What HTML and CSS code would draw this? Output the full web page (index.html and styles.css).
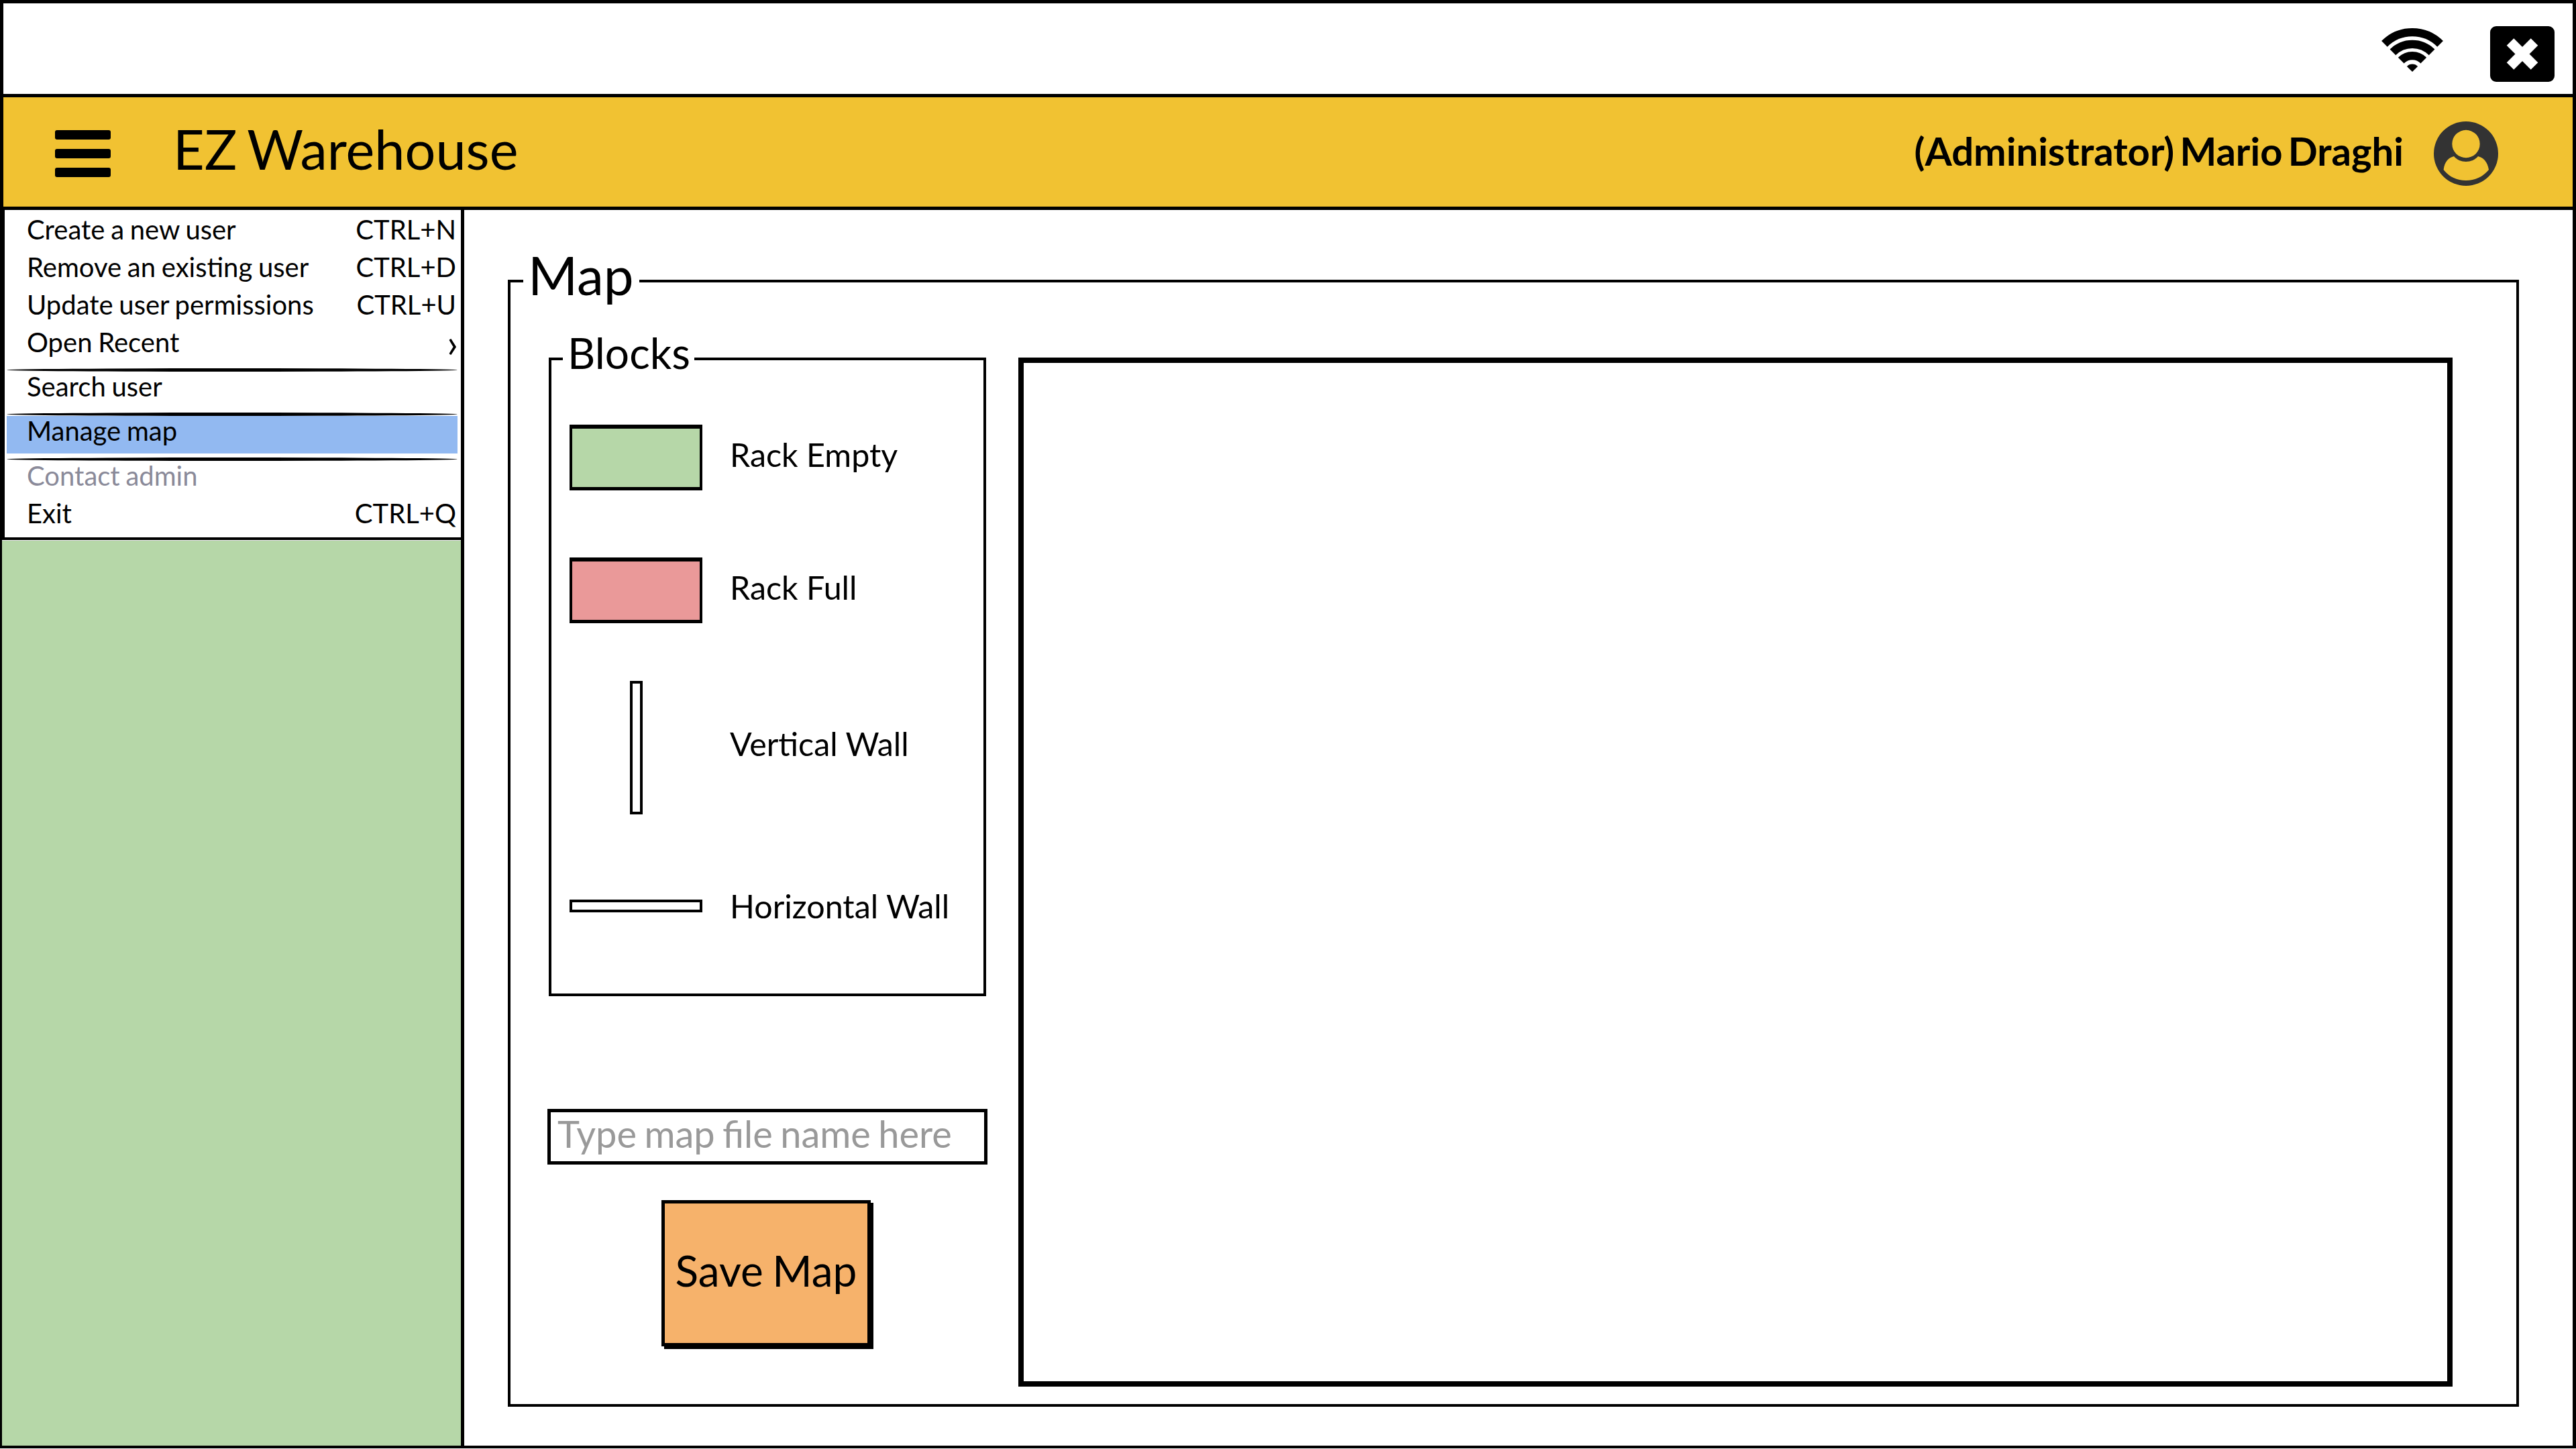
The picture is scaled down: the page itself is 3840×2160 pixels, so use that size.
FILE: index.html
```html
<!DOCTYPE html>
<html lang="en">
<head>
    <meta charset="UTF-8">
    <meta name="viewport" content="width=device-width, initial-scale=1.0">
    <title>EZ Warehouse - Manage map</title>
    <link rel="stylesheet" href="styles.css">
</head>
<body>
    <div class="window">
        <div class="statusbar">
            <svg class="wifi" viewBox="0 0 92 65" width="92" height="65">
                <g fill="none" stroke="#000" stroke-width="12.3">
                    <path d="M4.4 23.4A58.8 58.8 0 0 1 87.6 23.4"/>
                    <path d="M16.9 35.9A41.2 41.2 0 0 1 75.1 35.9"/>
                    <path d="M29.2 48.2A23.7 23.7 0 0 1 62.8 48.2"/>
                </g>
                <path d="M46 65L37.9 56.9A11.4 11.4 0 0 1 54.1 56.9Z"/>
            </svg>
            <button class="close-btn" type="button" aria-label="Close">
                <svg viewBox="0 0 96 83" width="96" height="83">
                    <path d="M30 23.5L66 59.5M66 23.5L30 59.5" fill="none" stroke="#fff" stroke-width="15"/>
                </svg>
            </button>
        </div>

        <header class="header">
            <div class="hamburger"><span></span><span></span><span></span></div>
            <h1 class="app-title">EZ Warehouse</h1>
            <div class="user-name">(Administrator) Mario Draghi</div>
            <svg class="avatar" viewBox="0 0 96 96" width="96" height="96">
                <circle cx="48" cy="48" r="48" fill="#333"/>
                <circle cx="48" cy="33.5" r="20.7" fill="#f1c232"/>
                <path d="M30 52C34 57 41 60 48 60C55 60 62 57 66 52C74 54 80 60 82 72C74 82 62 88 48 88C34 88 22 82 14.6 72C16 60 22 54 30 52Z" fill="#f1c232"/>
            </svg>
        </header>

        <div class="main">
            <aside class="sidebar">
                <nav class="menu">
                    <div class="menu-group">
                        <div class="menu-row"><span>Create a new user</span><span>CTRL+N</span></div>
                        <div class="menu-row"><span>Remove an existing user</span><span>CTRL+D</span></div>
                        <div class="menu-row"><span>Update user permissions</span><span>CTRL+U</span></div>
                        <div class="menu-row"><span>Open Recent</span><span class="menu-arrow">›</span></div>
                    </div>
                    <hr class="menu-sep">
                    <div class="menu-row menu-row-search"><span>Search user</span></div>
                    <hr class="menu-sep">
                    <div class="menu-row menu-row-active"><span>Manage map</span></div>
                    <hr class="menu-sep menu-sep-last">
                    <div class="menu-group">
                        <div class="menu-row menu-row-disabled"><span>Contact admin</span></div>
                        <div class="menu-row"><span>Exit</span><span>CTRL+Q</span></div>
                    </div>
                </nav>
                <div class="sidebar-fill"></div>
            </aside>

            <main class="content">
                <fieldset class="map-panel">
                    <legend class="map-title">Map</legend>
                    <div class="map-body">
                        <div class="tools">
                            <fieldset class="blocks">
                                <legend class="blocks-title">Blocks</legend>
                                <div class="block-row block-row-empty">
                                    <div class="block-slot"><div class="rack rack-empty"></div></div>
                                    <span>Rack Empty</span>
                                </div>
                                <div class="block-row block-row-full">
                                    <div class="block-slot"><div class="rack rack-full"></div></div>
                                    <span>Rack Full</span>
                                </div>
                                <div class="block-row block-row-vwall">
                                    <div class="block-slot"><div class="wall-v"></div></div>
                                    <span>Vertical Wall</span>
                                </div>
                                <div class="block-row block-row-hwall">
                                    <div class="block-slot"><div class="wall-h"></div></div>
                                    <span>Horizontal Wall</span>
                                </div>
                            </fieldset>
                            <input class="file-name" type="text" placeholder="Type map file name here">
                            <button class="save-btn" type="button">Save Map</button>
                        </div>
                        <div class="map-canvas"></div>
                    </div>
                </fieldset>
            </main>
        </div>
    </div>
</body>
</html>
```

FILE: styles.css
```css
* {
    box-sizing: border-box;
}
body {
    margin: 0;
    background-color: white;
    font-family: Lato, "Open Sans", sans-serif;
    color: black;
}
.window {
    width: 3840px;
    height: 2159px;
    border-style: solid;
    border-color: black;
    border-width: 5px 5px 4px 3px;
    display: flex;
    flex-direction: column;
}

/* top strip */
.statusbar {
    height: 135px;
    flex: none;
    display: flex;
    justify-content: flex-end;
    align-items: flex-start;
    gap: 70px;
    padding: 34px 27px 0 0;
    border-left: 2px solid black;
}
.wifi {
    margin-top: 3px;
}
.close-btn {
    width: 96px;
    height: 83px;
    padding: 0;
    border: none;
    border-radius: 9px;
    background-color: black;
}
.close-btn svg {
    display: block;
}

/* yellow header */
.header {
    height: 173px;
    flex: none;
    display: flex;
    align-items: center;
    padding: 5px 111px 0 77px;
    background-color: #f1c232;
    border-top: 5px solid black;
    border-bottom: 5px solid black;
    border-left: 2px solid black;
}
.hamburger {
    width: 83px;
    display: flex;
    flex-direction: column;
    gap: 14px;
}
.hamburger span {
    height: 14px;
    background-color: black;
    border-radius: 3px;
}
.app-title {
    margin: 0 0 14px 93px;
    font-size: 81px;
    font-weight: 400;
    line-height: 96px;
    word-spacing: -5px;
}
.user-name {
    margin: 0 0 8px auto;
    font-size: 58px;
    font-weight: 700;
    line-height: 68px;
    word-spacing: -6px;
}
.avatar {
    margin-left: 45px;
}

/* body */
.main {
    flex: 1;
    display: flex;
    min-height: 0;
}
.sidebar {
    width: 689px;
    flex: none;
    display: flex;
    flex-direction: column;
    border-right: 5px solid black;
}
.menu {
    height: 492px;
    flex: none;
    padding: 8px 0 0 3px;
    border-left: 4px solid black;
    border-bottom: 4px solid black;
}
.menu-group {
    display: flex;
    flex-direction: column;
    gap: 16px;
}
.menu-row {
    width: 672px;
    height: 40px;
    display: flex;
    justify-content: space-between;
    padding: 0 2px 0 30px;
    font-size: 40px;
    line-height: 42px;
    word-spacing: -1.5px;
}
.menu-arrow {
    margin-right: -3px;
    font-size: 60px;
}
.menu-row-active {
    height: 56px;
    padding-top: 1px;
    background-color: #92b9f1;
}
.menu-row-disabled {
    color: #8a8a99;
}
.menu-sep {
    width: 672px;
    height: 5px;
    margin: 20px 0 1px;
    border: none;
    background-color: black;
    border-radius: 50% / 50%;
}
.menu-row-search + .menu-sep {
    margin-bottom: 0;
}
.menu-sep-last {
    margin-top: 6px;
}
.sidebar-fill {
    flex: 1;
    margin-top: 1px;
    background-color: #b6d7a8;
}

/* map panel */
.content {
    flex: 1;
    min-width: 0;
    padding: 56px 80px 0 65px;
}
.map-panel {
    height: 1728px;
    margin: 0;
    padding: 0 0 0 55px;
    border: 4px solid black;
    min-inline-size: 0;
}
.map-title {
    margin-left: -36px;
    padding: 0 8px 20px 7px;
    font-size: 80px;
    line-height: 80px;
}
.map-body {
    display: flex;
    align-items: flex-start;
    gap: 46px;
}
.tools {
    width: 656px;
    flex: none;
    display: flex;
    flex-direction: column;
    align-items: center;
    padding-top: 25px;
}
.blocks {
    width: 652px;
    height: 991px;
    margin: 0;
    padding: 0 0 0 27px;
    border: 4px solid black;
    min-inline-size: 0;
}
.blocks-title {
    margin-left: -10px;
    padding: 0 6px 18px 7px;
    font-size: 64px;
    line-height: 64px;
}
.block-row {
    display: flex;
    align-items: center;
    gap: 41px;
    font-size: 48.4px;
    line-height: 58px;
}
.block-row-empty {
    margin-top: 57px;
    margin-bottom: 100px;
}
.block-row-full {
    margin-bottom: 86px;
}
.block-row-vwall {
    margin-bottom: 107px;
}
.block-row-empty span,
.block-row-full span {
    margin-bottom: 10px;
}
.block-row-vwall span {
    margin-bottom: 14px;
}
.block-slot {
    width: 198px;
    flex: none;
    display: flex;
    justify-content: center;
}
.rack {
    width: 198px;
    height: 98px;
    border-style: solid;
    border-color: black;
    border-width: 6px 4px 5px 4px;
}
.rack-empty {
    background-color: #b6d7a8;
}
.rack-full {
    background-color: #ea9999;
}
.wall-v {
    width: 19px;
    height: 199px;
    border: 4px solid black;
}
.wall-h {
    width: 200px;
    height: 19px;
    border: 4px solid black;
}
.file-name {
    width: 656px;
    height: 83px;
    margin-top: 168px;
    padding: 0 0 10px 10px;
    border: 5px solid black;
    font-family: inherit;
    font-size: 56px;
    word-spacing: -3px;
    outline: none;
}
.file-name::placeholder {
    color: #999;
    opacity: 1;
}
.save-btn {
    width: 312px;
    height: 218px;
    margin: 53px 4px 0 0;
    padding: 0 0 10px;
    border: 5px solid black;
    background-color: #f6b26b;
    box-shadow: 4px 4px 0 black;
    font-family: inherit;
    font-size: 64px;
    word-spacing: -3px;
    color: black;
}
.map-canvas {
    width: 2138px;
    height: 1534px;
    margin-top: 64px;
    flex: none;
    border: 8px solid black;
}
```
